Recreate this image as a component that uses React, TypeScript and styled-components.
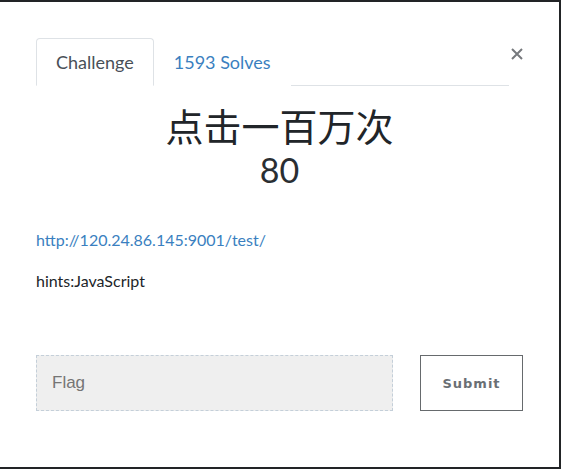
import React from "react";
import styled, { createGlobalStyle } from "styled-components";

const Global = createGlobalStyle`
  html, body { margin: 0; padding: 0; background: #222426; }
  body { width: 561px; height: 469px; overflow: hidden; }
  * { box-sizing: border-box; }
`;

const Frame = styled.div`
  padding: 2px 2px 2px 0;
  height: 469px;
`;

const Modal = styled.div`
  background: #fff;
  height: 465px;
  padding: 36px 36px 0 36px;
  display: flex;
  flex-direction: column;
  font-family: Lato, "Noto Sans CJK SC", sans-serif;
  color: #212529;
`;

const Header = styled.div`
  display: flex;
  align-items: flex-start;
`;

const Nav = styled.div`
  flex: 1;
  display: flex;
  border-bottom: 1px solid #dee2e6;
  margin-top: 0;
`;

const Tab = styled.div<{ $active?: boolean }>`
  height: 48px;
  padding: 0 19px 0 19px;
  display: flex;
  align-items: center;
  font-size: 18px;
  margin-bottom: -1px;
  color: ${(p) => (p.$active ? "#495057" : "#3a7fc0")};
  background: #fff;
  border: 1px solid ${(p) => (p.$active ? "#dee2e6" : "transparent")};
  border-bottom-color: ${(p) => (p.$active ? "#fff" : "transparent")};
  border-radius: 4px 4px 0 0;
`;

const Close = styled.div`
  width: 14px;
  margin-top: 10px;
  display: flex;
  justify-content: flex-end;
  color: #76797d;
`;

const Title = styled.div`
  text-align: center;
  font-size: 38px;
  line-height: 44px;
  margin-top: 18px;
`;

const Points = styled.div`
  text-align: center;
  font-size: 34px;
  line-height: 40px;
  margin-top: 2px;
  font-weight: 400;
  color: #2a2e32;
`;

const Link = styled.a`
  display: block;
  margin-top: 40px;
  font-size: 16px;
  line-height: 20px;
  color: #3a7fc0;
  text-decoration: none;
`;

const Hint = styled.div`
  margin-top: 21px;
  font-size: 16px;
  line-height: 20px;
  color: #212529;
`;

const Form = styled.div`
  margin-top: 64px;
  display: flex;
  align-items: center;
  gap: 27px;
`;

const Input = styled.div`
  width: 357px;
  height: 56px;
  background: #efefef;
  border: 1px dashed #c4cfd9;
  display: flex;
  align-items: center;
  padding-left: 15px;
  font-family: "Liberation Sans", Arial, sans-serif;
  font-size: 17px;
  color: #757575;
`;

const Button = styled.div`
  width: 103px;
  height: 56px;
  border: 1px solid #666a6d;
  display: flex;
  align-items: center;
  justify-content: center;
  font-family: "DejaVu Sans", sans-serif;
  font-size: 13px;
  font-weight: 600;
  letter-spacing: 1px;
  color: #6a6f74;
`;

export default function App() {
  return (
    <>
      <Global />
      <Frame>
        <Modal>
          <Header>
            <Nav>
              <Tab $active>Challenge</Tab>
              <Tab>1593 Solves</Tab>
            </Nav>
            <Close>
              <svg width="12" height="12" viewBox="0 0 12 12">
                <path d="M1 1L11 11M11 1L1 11" stroke="currentColor" strokeWidth="2" />
              </svg>
            </Close>
          </Header>
          <Title>点击一百万次</Title>
          <Points>80</Points>
          <Link href="#">http://120.24.86.145:9001/test/</Link>
          <Hint>hints:JavaScript</Hint>
          <Form>
            <Input>Flag</Input>
            <Button>Submit</Button>
          </Form>
        </Modal>
      </Frame>
    </>
  );
}
